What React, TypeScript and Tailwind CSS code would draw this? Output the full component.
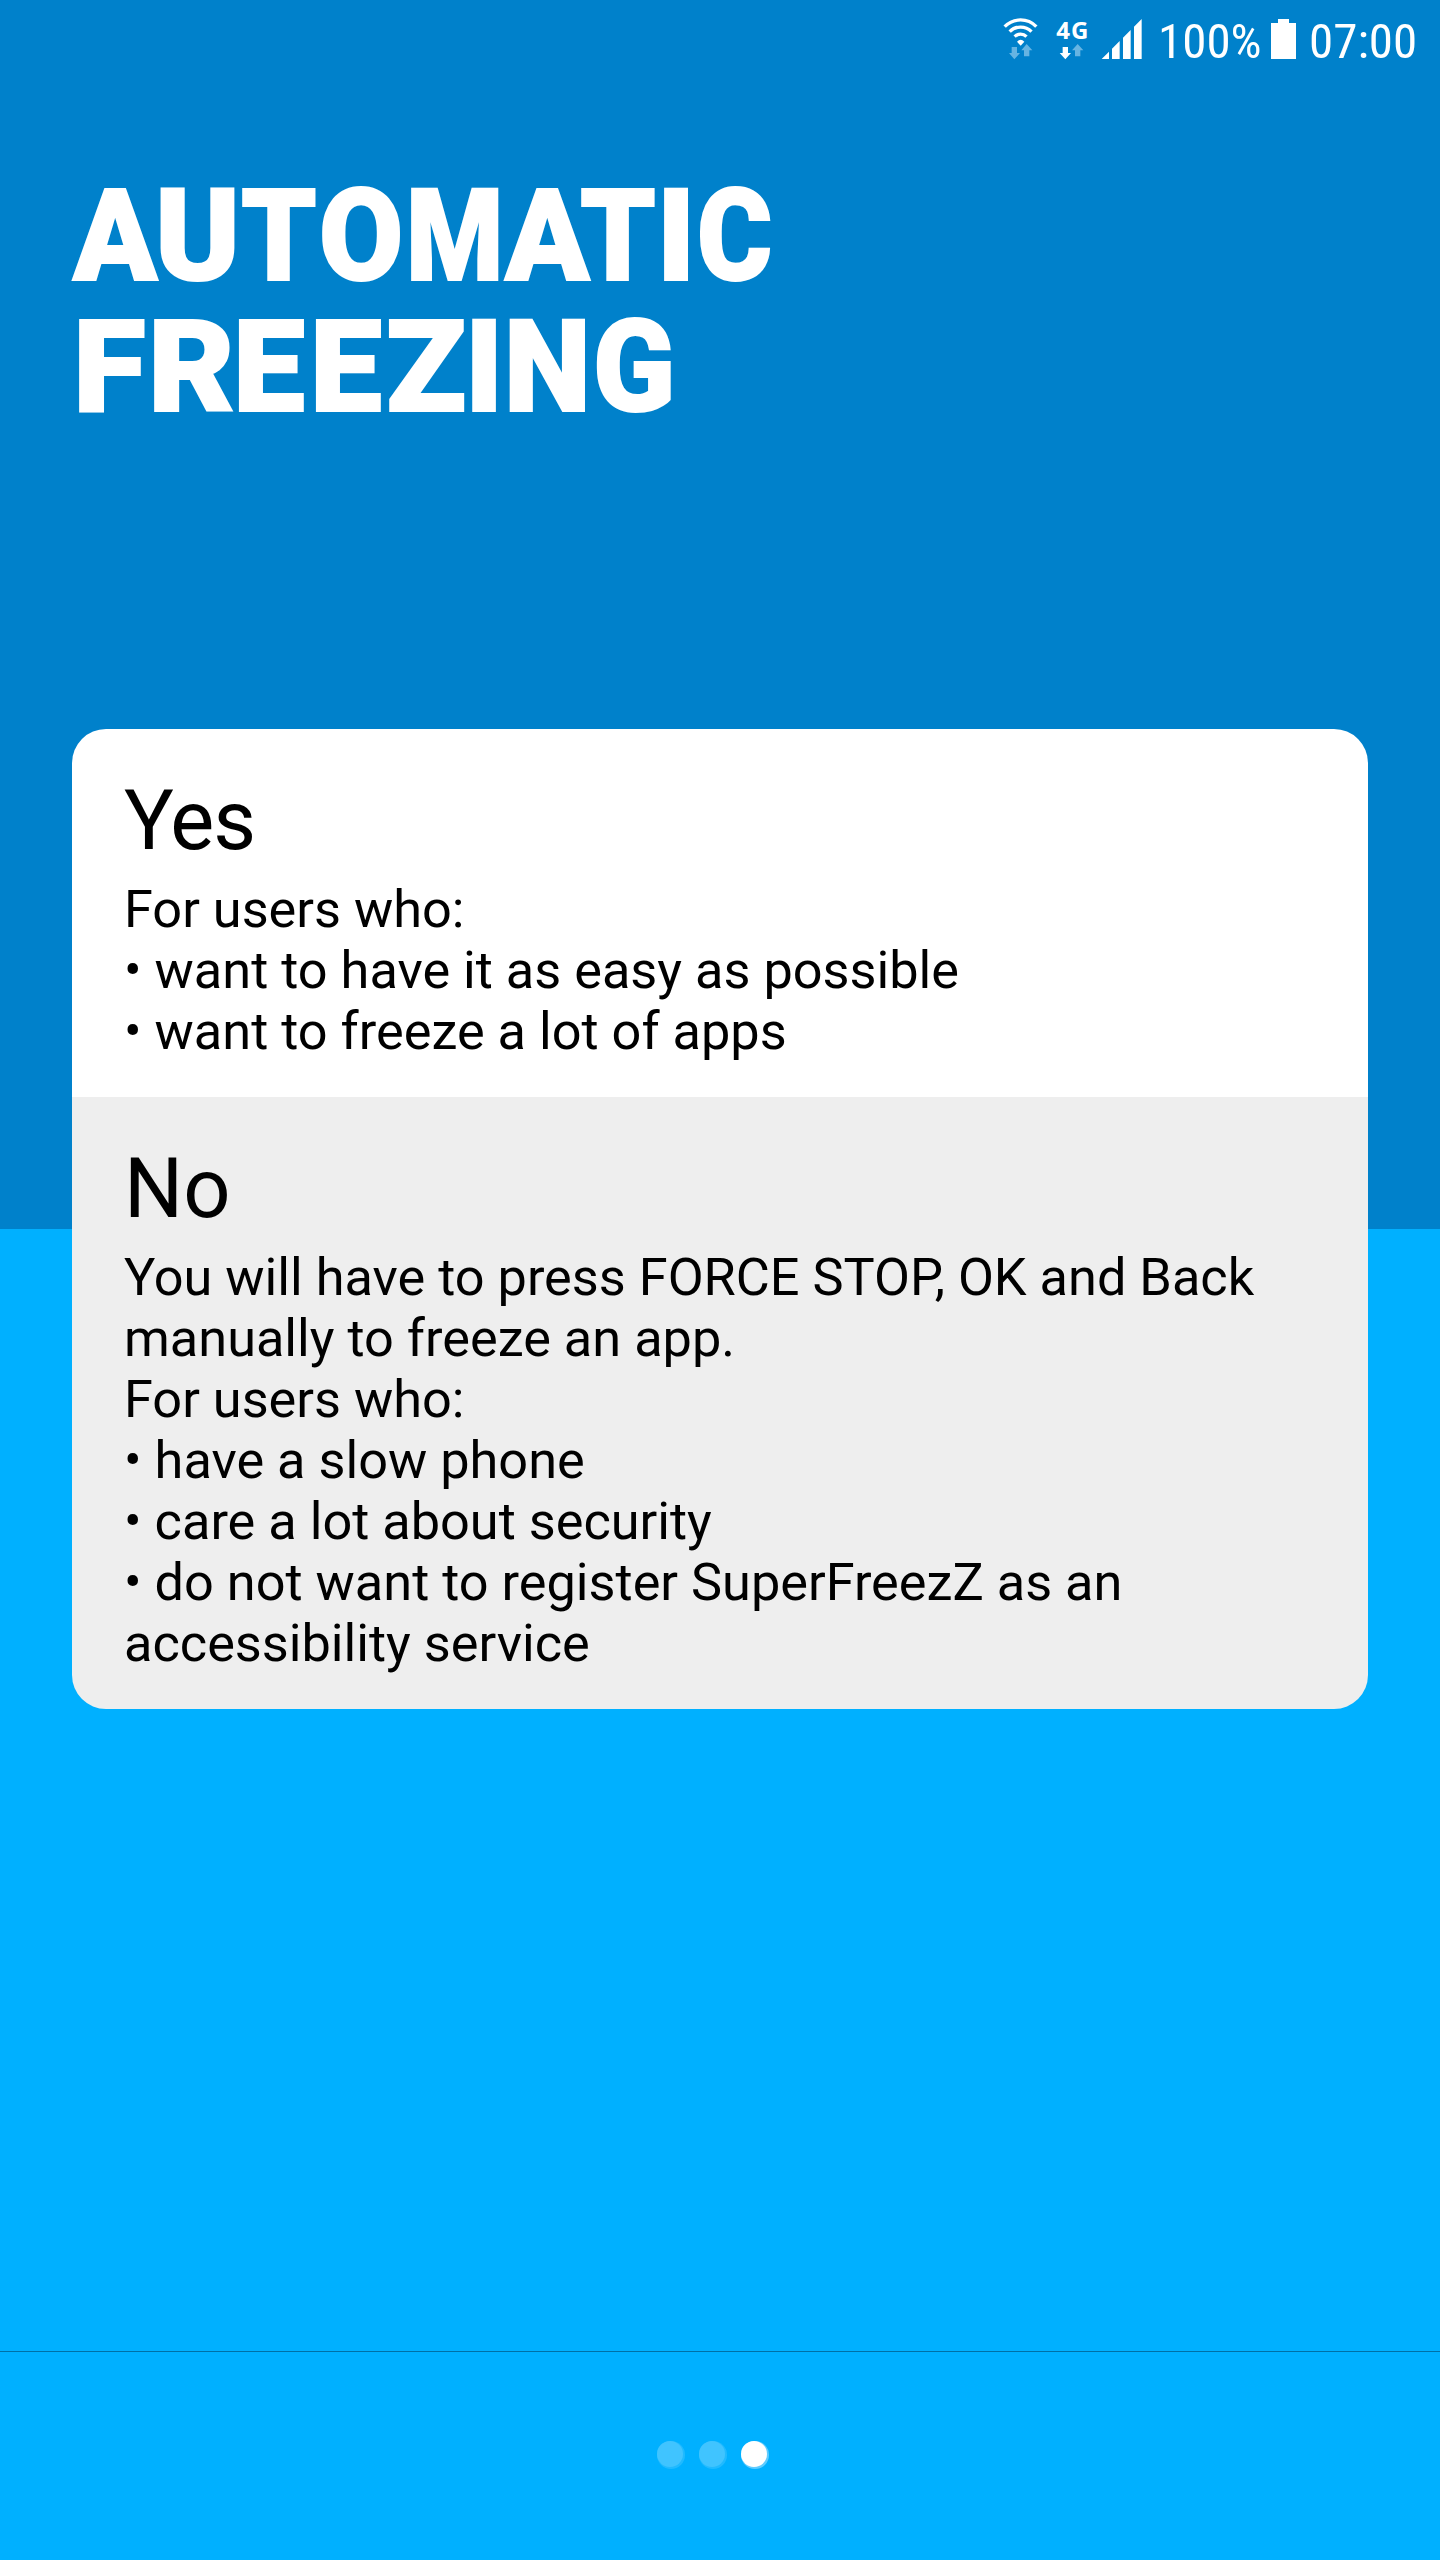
function WifiIcon() {
  return (
    <svg className="mt-[15px] h-[47px] w-10 shrink-0" viewBox="30 45 120 141">
      <g fill="none" stroke="#fff" strokeWidth="10">
        <path d="M44 80A66 66 0 0 1 139 80" />
        <path d="M59 95A46 46 0 0 1 124.500 95" />
        <path d="M74 110A25 25 0 0 1 109.500 110" />
      </g>
      <path d="M81 125Q92 114 103 125L92 137Z" fill="#fff" />
      <path d="M65 141h16v18h9L73 178 57 159h8zM102 169h16v-18h9L110 132 94 151h8z" fill="#66b4e2" />
    </svg>
  );
}

function NetworkIcon() {
  return (
    <svg className="mt-[15px] h-[47px] w-10 shrink-0 overflow-visible [font-stretch:100%]" viewBox="186 45 120 141">
      <text x="199 243" y="117" fontFamily="Open Sans" fontWeight="700" fontSize="72" fill="#fff">4G</text>
      <path d="M218 141h16v18h9L226 178 209 159h9z" fill="#fff" />
      <path d="M255 169h16v-18h9L263 132 246 151h9z" fill="#66b4e2" />
    </svg>
  );
}

function SignalIcon() {
  return (
    <svg className="mt-[15px] -ml-1 h-[47px] w-[44px] shrink-0" viewBox="330 45 132 141">
      <path d="M335 177L357 155V177ZM366 177V146L389 123V177ZM399 177V113L422 90V177ZM432 177V80L455 57V177Z" fill="#fff" />
    </svg>
  );
}

function BatteryIcon() {
  return (
    <svg className="mt-[19px] h-10 w-[25px] shrink-0" viewBox="0 0 25 40">
      <path d="M7 0H18V4H25V40H0V4H7Z" fill="#fff" />
    </svg>
  );
}

function StatusBar() {
  return (
    <div className="flex h-[82px] items-start justify-end gap-[13px] pr-[21px] text-[49px] leading-[84px] whitespace-nowrap [font-stretch:75%]">
      <div className="mr-px flex gap-3">
        <WifiIcon />
        <NetworkIcon />
        <SignalIcon />
      </div>
      <div className="w-[100px]">100%</div>
      <BatteryIcon />
      <div className="w-[110px]">07:00</div>
    </div>
  );
}

// Left bearing and ink width of each heavy capital at the title size.
const GLYPHS: Record<string, [number, number]> = {
  A: [-1.3, 89.4],
  U: [5.1, 74.6],
  T: [1.3, 78.2],
  O: [3.4, 81.1],
  M: [6.2, 99.7],
  I: [7.2, 24],
  C: [3.4, 78.2],
  F: [6.2, 62.6],
  R: [6.2, 75.8],
  E: [6.2, 64.8],
  Z: [2.3, 73.3],
  N: [6.2, 77.4],
  G: [4.3, 78.2],
};

// Letter, advance to the next letter, drawn width.
type Letter = [string, number, number];

const LINE_ONE: Letter[] = [
  ["A", 88.5, 86.5],
  ["U", 82.2, 74.7],
  ["T", 79.3, 73.3],
  ["O", 89, 77.3],
  ["M", 93, 86.7],
  ["A", 77.5, 86.7],
  ["T", 82.5, 73.5],
  ["I", 36, 24],
  ["C", 70, 70],
];

const LINE_TWO: Letter[] = [
  ["F", 75, 65],
  ["R", 85, 79],
  ["E", 77, 65],
  ["E", 72, 65],
  ["Z", 84.3, 75.3],
  ["I", 37.7, 23.7],
  ["N", 87, 74.7],
  ["G", 74, 73.7],
];

function TitleLine({ letters, className = "" }: { letters: Letter[]; className?: string }) {
  return (
    <span className={`flex ${className}`}>
      {letters.map(([char, advance, width], i) => {
        const [bearing, ink] = GLYPHS[char];
        const scale = width / ink;
        return (
          <span key={i} className="block shrink-0" style={{ width: advance }}>
            <span
              className="inline-block origin-left"
              style={{ transform: `scaleX(${scale})`, marginLeft: -bearing * scale }}
            >
              {char}
            </span>
          </span>
        );
      })}
    </span>
  );
}

function Option({
  title,
  lines,
  className,
  titleClassName = "",
}: {
  title: string;
  lines: string[];
  className: string;
  titleClassName?: string;
}) {
  return (
    <section className={`px-[52px] pt-[43px] pb-[35px] text-black ${className}`}>
      <h2 className={`text-[83px] leading-[98px] ${titleClassName}`}>{title}</h2>
      <div className="mt-[9px] text-[52.28px] leading-[61px] whitespace-nowrap">
        {lines.map((line) => (
          <p key={line}>{line}</p>
        ))}
      </div>
    </section>
  );
}

export default function App() {
  return (
    <div className="flex h-[2560px] w-[1440px] flex-col bg-[linear-gradient(#0081cb_1229px,#00b0ff_1229px)] font-['Roboto',sans-serif] text-white">
      <StatusBar />
      <h1 className="mt-[89px] ml-[72px] text-[128px] leading-[131px] font-black whitespace-nowrap [-webkit-text-stroke:2px_white]">
        <TitleLine letters={LINE_ONE} />
        <TitleLine letters={LINE_TWO} className="ml-[7px]" />
      </h1>
      <main className="mx-[72px] mt-[296px] overflow-hidden rounded-[34px]">
        <Option
          title="Yes"
          lines={["For users who:", "• want to have it as easy as possible", "• want to freeze a lot of apps"]}
          className="bg-white"
          titleClassName="tracking-[-1px]"
        />
        <Option
          title="No"
          lines={[
            "You will have to press FORCE STOP, OK and Back",
            "manually to freeze an app.",
            "For users who:",
            "• have a slow phone",
            "• care a lot about security",
            "• do not want to register SuperFreezZ as an",
            "accessibility service",
          ]}
          className="bg-[#eeeeee]"
        />
      </main>
      <footer className="mt-auto flex h-[209px] justify-center gap-4 border-t border-[#0070a6] pt-[89px] pr-[16px]">
        <span className="size-[26px] rounded-full bg-[#40c4ff] shadow-[1px_1px_0_1px_#20baff]" />
        <span className="size-[26px] rounded-full bg-[#40c4ff] shadow-[1px_1px_0_1px_#20baff]" />
        <span className="size-[26px] rounded-full bg-white shadow-[1px_1px_0_1px_#60ccff]" />
      </footer>
    </div>
  );
}
